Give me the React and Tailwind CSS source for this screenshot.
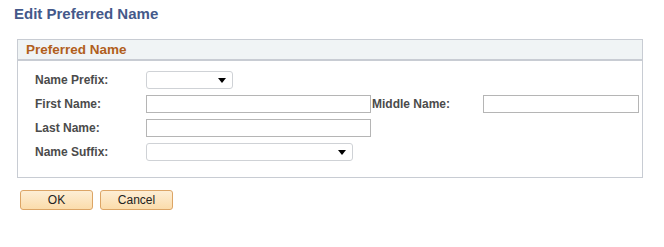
import React from "react";

function Arrow() {
  return (
    <svg width="8" height="5" viewBox="0 0 8 5" className="block">
      <path d="M0 0 H8 L4 5 Z" fill="#000" />
    </svg>
  );
}

function Select({ width }) {
  return (
    <div
      className="h-[18px] border border-[#cfd2d6] rounded-[3px] bg-white flex items-center justify-end pr-[6px]"
      style={{ width }}
    >
      <Arrow />
    </div>
  );
}

function Input({ width }) {
  return (
    <div
      className="h-[18px] border border-[#b5b5b5] bg-white"
      style={{ width }}
    />
  );
}

function Label({ children, className = "" }) {
  return (
    <div className={`text-[12px] font-bold text-[#4b4b4b] leading-[18px] ${className}`}>
      {children}
    </div>
  );
}

export default function App() {
  return (
    <div
      className="w-[664px] h-[247px] bg-white"
      style={{ fontFamily: '"Liberation Sans", Arial, sans-serif' }}
    >
      <div className="pl-[14px] pt-[5px] text-[15px] font-bold text-[#44598a] leading-[18px]">
        Edit Preferred Name
      </div>
      <div className="ml-[17px] mt-[16px] w-[626px] border border-[#c8ccd3]">
        <div className="h-[21px] bg-[#f0f4f5] border-b-2 border-[#c8ccd3] pl-[8px] text-[13.5px] font-bold text-[#b15f1c] leading-[19px]">
          Preferred Name
        </div>
        <div className="pt-[10px] pb-[16px] pl-[17px] flex flex-col gap-[6px]">
          <div className="flex items-center">
            <Label className="w-[111px]">Name Prefix:</Label>
            <Select width={87} />
          </div>
          <div className="flex items-center">
            <Label className="w-[111px]">First Name:</Label>
            <Input width={225} />
            <Label className="w-[112px] pl-[1px]">Middle Name:</Label>
            <Input width={156} />
          </div>
          <div className="flex items-center">
            <Label className="w-[111px]">Last Name:</Label>
            <Input width={225} />
          </div>
          <div className="flex items-center">
            <Label className="w-[111px]">Name Suffix:</Label>
            <Select width={207} />
          </div>
        </div>
      </div>
      <div className="ml-[20px] mt-[12px] flex gap-[7px]">
        <button className="w-[73px] h-[20px] border border-[#dca566] rounded-[3px] bg-gradient-to-b from-[#fdeed5] to-[#fbdcab] text-[12px] text-[#222] leading-[18px]">
          OK
        </button>
        <button className="w-[73px] h-[20px] border border-[#dca566] rounded-[3px] bg-gradient-to-b from-[#fdeed5] to-[#fbdcab] text-[12px] text-[#222] leading-[18px]">
          Cancel
        </button>
      </div>
    </div>
  );
}
